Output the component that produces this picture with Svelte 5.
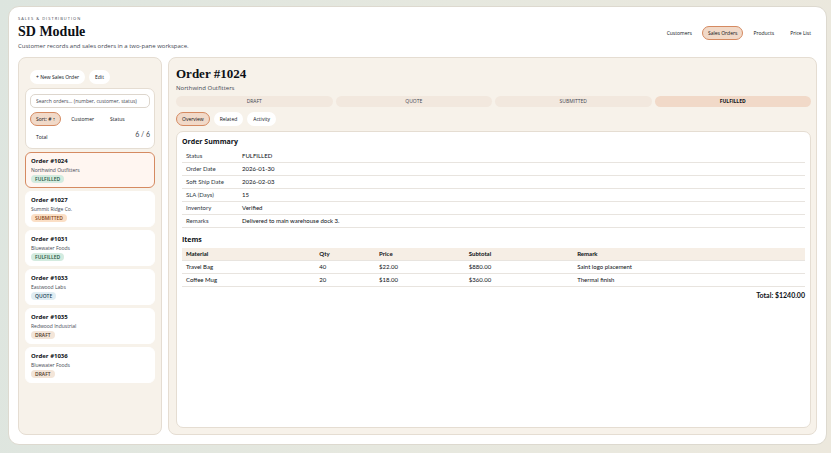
<script lang="ts">
  type Status = 'FULFILLED' | 'SUBMITTED' | 'QUOTE' | 'DRAFT'

  const modules = ['Customers', 'Sales Orders', 'Products', 'Price List']
  const sorts = ['#', 'Customer', 'Status', 'Total']
  const steps: Status[] = ['DRAFT', 'QUOTE', 'SUBMITTED', 'FULFILLED']
  const tabs = ['Overview', 'Related', 'Activity']

  const orders: { id: number; customer: string; status: Status }[] = [
    { id: 1024, customer: 'Northwind Outfitters', status: 'FULFILLED' },
    { id: 1027, customer: 'Summit Ridge Co.', status: 'SUBMITTED' },
    { id: 1031, customer: 'Bluewater Foods', status: 'FULFILLED' },
    { id: 1033, customer: 'Eastwood Labs', status: 'QUOTE' },
    { id: 1035, customer: 'Redwood Industrial', status: 'DRAFT' },
    { id: 1036, customer: 'Bluewater Foods', status: 'DRAFT' },
  ]

  const summary = [
    ['Status', 'FULFILLED'],
    ['Order Date', '2026-01-30'],
    ['Soft Ship Date', '2026-02-03'],
    ['SLA (Days)', '15'],
    ['Inventory', 'Verified'],
    ['Remarks', 'Delivered to main warehouse dock 3.'],
  ]

  const items = [
    { material: 'Travel Bag', qty: 40, price: 22, remark: 'Saint logo placement' },
    { material: 'Coffee Mug', qty: 20, price: 18, remark: 'Thermal finish' },
  ]

  let activeModule = $state('Sales Orders')
  let sort = $state('#')
  let tab = $state('Overview')
  let selectedId = $state(1024)
  let query = $state('')

  const selected = $derived(orders.find((o) => o.id === selectedId) ?? orders[0])
  const shown = $derived(
    orders.filter((o) => `${o.id} ${o.customer} ${o.status}`.toLowerCase().includes(query.toLowerCase()))
  )
  const total = items.reduce((sum, i) => sum + i.qty * i.price, 0)
  const money = (n: number) => '$' + n.toFixed(2)
</script>

<div class="page">
  <div class="shell">
    <header>
      <div>
        <div class="eyebrow">SALES &amp; DISTRIBUTION</div>
        <h1>SD Module</h1>
        <p class="sub">Customer records and sales orders in a two-pane workspace.</p>
      </div>
      <nav>
        {#each modules as m}
          <button class="pill" class:active={m === activeModule} onclick={() => (activeModule = m)}>{m}</button>
        {/each}
      </nav>
    </header>

    <div class="panes">
      <aside class="pane side">
        <div class="actions">
          <button class="pill">+ New Sales Order</button>
          <button class="pill">Edit</button>
        </div>
        <div class="filter">
          <input type="text" aria-label="Search orders" placeholder="Search orders... (number, customer, status)" bind:value={query} />
          <div class="sorts">
            <div class="chips">
              {#each sorts as s}
                <button class="pill" class:active={s === sort} onclick={() => (sort = s)}>
                  {s === sort ? `Sort: ${s} ↑` : s}
                </button>
              {/each}
            </div>
            <span class="count">{shown.length} / {orders.length}</span>
          </div>
        </div>
        <div class="list">
          {#each shown as o (o.id)}
            <button class="order" class:active={o.id === selectedId} onclick={() => (selectedId = o.id)}>
              <span class="name">Order #{o.id}</span>
              <span class="customer">{o.customer}</span>
              <span class="badge {o.status.toLowerCase()}">{o.status}</span>
            </button>
          {/each}
        </div>
      </aside>

      <main class="pane detail">
        <h2>Order #{selected.id}</h2>
        <p class="sub client">{selected.customer}</p>
        <div class="steps">
          {#each steps as s}
            <div class="step" class:current={s === selected.status}>{s}</div>
          {/each}
        </div>
        <div class="tabs">
          {#each tabs as t}
            <button class="pill" class:active={t === tab} onclick={() => (tab = t)}>{t}</button>
          {/each}
        </div>
        <section class="card">
          <h3>Order Summary</h3>
          <table class="summary">
            <tbody>
              {#each summary as [label, value]}
                <tr><th scope="row">{label}</th><td>{value}</td></tr>
              {/each}
            </tbody>
          </table>
          <h3>Items</h3>
          <table class="items">
            <thead>
              <tr><th>Material</th><th>Qty</th><th>Price</th><th>Subtotal</th><th>Remark</th></tr>
            </thead>
            <tbody>
              {#each items as i}
                <tr>
                  <td>{i.material}</td>
                  <td>{i.qty}</td>
                  <td>{money(i.price)}</td>
                  <td>{money(i.qty * i.price)}</td>
                  <td>{i.remark}</td>
                </tr>
              {/each}
            </tbody>
          </table>
          <div class="total">Total: {money(total)}</div>
        </section>
      </main>
    </div>
  </div>
</div>

<style>
  :global(body) {
    margin: 0;
  }
  .page {
    --line: #e5ddd2;
    --accent: #d58a61;
    --peach: #f1d9c8;
    box-sizing: border-box;
    display: flex;
    min-height: 100vh;
    padding: 6px 4px 8px 8px;
    background: linear-gradient(100deg, #dde5df 0%, #e6e8df 50%, #ece8dd 100%);
    font-family: 'Open Sans', 'Noto Sans', sans-serif;
    font-size: 5px;
    line-height: 8px;
    color: #0c1015;
  }
  .page * {
    box-sizing: border-box;
  }
  h1,
  h2,
  h3,
  p {
    margin: 0;
  }
  h1,
  h2 {
    font-family: 'Palatino Linotype', 'Liberation Serif', serif;
    font-weight: 700;
  }
  button,
  input {
    font: inherit;
    color: inherit;
  }
  .shell {
    flex: 1;
    display: flex;
    flex-direction: column;
    padding: 8px 9px 9px;
    background: #fff;
    border: 1px solid #ddd9cf;
    border-radius: 11px;
  }
  header {
    display: flex;
    align-items: center;
    justify-content: space-between;
    padding-bottom: 7px;
  }
  .eyebrow {
    font-size: 4px;
    line-height: 7px;
    letter-spacing: 1px;
    color: #3f4752;
  }
  h1 {
    font-size: 14px;
    line-height: 20px;
  }
  .sub {
    font-size: 6px;
    line-height: 8px;
    color: #3f4752;
  }
  nav,
  .tabs,
  .actions {
    display: flex;
    align-items: center;
    gap: 4px;
  }
  .pill {
    height: 14px;
    padding: 0 5px;
    border: 1px solid transparent;
    border-radius: 7px;
    background: #fff;
    white-space: nowrap;
    cursor: pointer;
  }
  .pill.active {
    background: var(--peach);
    border-color: var(--accent);
  }
  .panes {
    flex: 1;
    display: grid;
    grid-template-columns: minmax(144px, 18%) 1fr;
    gap: 6px;
  }
  .pane {
    padding: 6px;
    background: #f7f2ea;
    border: 1px solid var(--line);
    border-radius: 8px;
  }
  .actions {
    padding: 6px 5px 4px;
  }
  .filter {
    padding: 5px 4px 4px;
    background: #fff;
    border: 1px solid var(--line);
    border-radius: 7px;
  }
  input {
    display: block;
    width: 100%;
    height: 14px;
    padding: 0 5px;
    border: 1px solid #ddd6cd;
    border-radius: 5px;
    background: #fff;
    outline: none;
  }
  input::placeholder {
    color: #3f4752;
    opacity: 1;
  }
  .sorts {
    display: flex;
    align-items: flex-end;
    padding-top: 4px;
  }
  .chips {
    flex: 1;
    display: flex;
    flex-wrap: wrap;
    gap: 4px;
  }
  .count {
    padding-bottom: 6px;
    font-family: Lato, sans-serif;
    font-size: 7px;
    color: #3f4752;
  }
  .list {
    display: flex;
    flex-direction: column;
    gap: 3px;
    padding-top: 3px;
  }
  .order {
    display: flex;
    flex-direction: column;
    align-items: flex-start;
    padding: 4px 5px;
    border: 1px solid #fff;
    border-radius: 6px;
    background: #fff;
    text-align: left;
    cursor: pointer;
  }
  .order.active {
    background: #fff6f1;
    border-color: var(--accent);
  }
  .name {
    font-size: 6px;
    line-height: 9px;
    font-weight: 700;
  }
  .customer {
    line-height: 8px;
    color: #3f4752;
  }
  .badge {
    margin-top: 1px;
    padding: 0 4px;
    border-radius: 4px;
    font-weight: 600;
  }
  .badge.fulfilled {
    background: #d3ebdf;
    color: #1f5540;
  }
  .badge.submitted {
    background: #fbdfc6;
    color: #84420f;
  }
  .badge.quote {
    background: #e0edf3;
    color: #204256;
  }
  .badge.draft {
    background: #f3e5d8;
    color: #4f3a28;
  }
  .detail {
    display: flex;
    flex-direction: column;
    padding: 6px 5px 6px 7px;
  }
  h2 {
    font-size: 13px;
    line-height: 20px;
  }
  .client {
    padding-bottom: 4px;
  }
  .steps {
    display: grid;
    grid-template-columns: repeat(4, 1fr);
    gap: 3px;
  }
  .step {
    border-radius: 6px;
    background: #f2e8de;
    line-height: 11px;
    text-align: center;
    color: #3f4752;
  }
  .step.current {
    background: var(--peach);
    font-weight: 700;
    color: #0c1015;
  }
  .tabs {
    padding: 5px 0;
  }
  .card {
    flex: 1;
    padding: 5px;
    background: #fff;
    border: 1px solid var(--line);
    border-radius: 7px;
  }
  h3 {
    font-size: 7px;
    line-height: 10px;
    padding-bottom: 3px;
  }
  table {
    width: 100%;
    border-collapse: collapse;
    font-family: Lato, 'Noto Sans', sans-serif;
    font-size: 6px;
  }
  th,
  td {
    padding: 2px 4px;
    border-bottom: 1px solid #e8e4df;
    text-align: left;
  }
  .summary {
    margin-bottom: 7px;
  }
  .summary th {
    width: 9%;
    font-weight: 400;
    color: #303842;
  }
  .items {
    table-layout: fixed;
  }
  .items thead th {
    background: #f6eee5;
  }
  .items th:nth-child(1) {
    width: 21.4%;
  }
  .items th:nth-child(2) {
    width: 9.6%;
  }
  .items th:nth-child(3) {
    width: 14.4%;
  }
  .items th:nth-child(4) {
    width: 17.4%;
  }
  .total {
    padding-top: 4px;
    font-family: Lato, 'Noto Sans', sans-serif;
    font-size: 7px;
    font-weight: 700;
    text-align: right;
  }
</style>
